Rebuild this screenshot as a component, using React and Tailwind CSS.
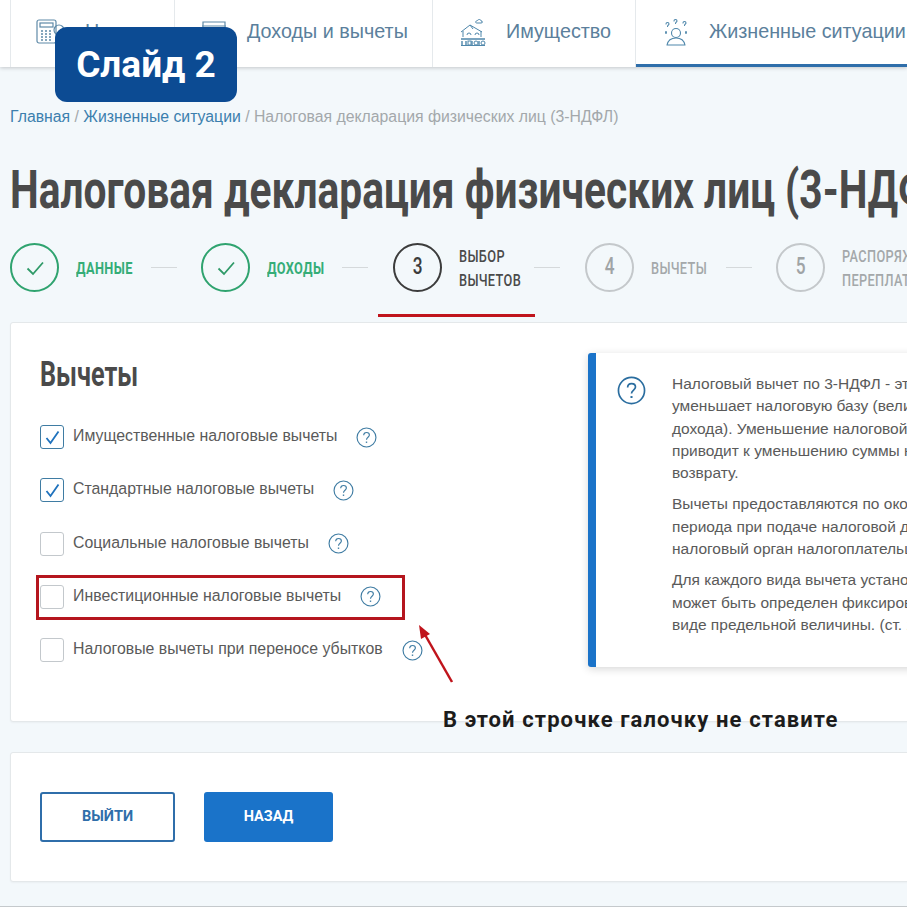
import React from 'react';

const TITLE_FONT = "font-['Roboto','Liberation_Sans',sans-serif]";

const steps = [
    { n: 1, lines: ['ДАННЫЕ'], state: 'done', w: 'w-[191px]' },
    { n: 2, lines: ['ДОХОДЫ'], state: 'done', w: 'w-[192px]' },
    { n: 3, lines: ['ВЫБОР', 'ВЫЧЕТОВ'], state: 'current', w: 'w-[192px]' },
    { n: 4, lines: ['ВЫЧЕТЫ'], state: 'todo', w: 'w-[191px]' },
    { n: 5, lines: ['РАСПОРЯЖЕНИЕ', 'ПЕРЕПЛАТОЙ'], state: 'todo', w: 'w-[300px]', last: true },
];

const deductions = [
    { label: 'Имущественные налоговые вычеты', checked: true },
    { label: 'Стандартные налоговые вычеты', checked: true },
    { label: 'Социальные налоговые вычеты', checked: false },
    { label: 'Инвестиционные налоговые вычеты', checked: false },
    { label: 'Налоговые вычеты при переносе убытков', checked: false },
];

const infoParagraphs = [
    [
        'Налоговый вычет по 3-НДФЛ - это сумма, которая',
        'уменьшает налоговую базу (величину',
        'дохода). Уменьшение налоговой базы',
        'приводит к уменьшению суммы налога к',
        'возврату.',
    ],
    [
        'Вычеты предоставляются по окончании',
        'периода при подаче налоговой декларации',
        'налоговый орган налогоплательщиком',
    ],
    [
        'Для каждого вида вычета установлен',
        'может быть определен фиксированной',
        'виде предельной величины. (ст. 218)',
    ],
];

const CalcIcon = () => (
    <svg width="30" height="26" viewBox="0 0 30 26" fill="none" stroke="#5f8aa8" strokeWidth="1.2">
        <rect x="1" y="1" width="19" height="23" rx="2" />
        <rect x="4" y="4" width="13" height="4" />
        <path d="M5 12h2M9 12h2M13 12h2M5 15h2M9 15h2M13 15h2M5 18h2M9 18h2M13 18h2M5 21h2M9 21h2M13 21h2" strokeWidth="1.6" />
        <circle cx="23" cy="11" r="5" />
    </svg>
);

const FolderIcon = () => (
    <svg width="28" height="24" viewBox="0 0 28 24" fill="none" stroke="#5f8aa8" strokeWidth="1.2">
        <path d="M2 20V2h22v6" />
        <path d="M1 6h24M1 9h26v13H1z" />
    </svg>
);

const HouseIcon = () => (
    <svg width="26" height="28" viewBox="0 0 26 28" fill="none" stroke="#4f87ab" strokeWidth="1">
        <path d="M1 14 10 7l12 7M3 13v6M21 13v6M10 7l3 4" />
        <path d="M17 5c-2 0 -2-2 0-2 1-2 4-2 4 0 2 0 2 2 0 2z" />
        <path d="M7 17a2 2 0 0 1 4 0M15 17a2 2 0 0 1 4 0" />
        <path d="M1 21h24M2 27V23M6 27V23M12 27V23M19 27V23" strokeWidth="1.4" />
        <rect x="8" y="23" width="3" height="4" />
        <circle cx="16" cy="25" r="2" />
        <circle cx="23" cy="25" r="2" />
        <path d="M1 27.5h24" />
    </svg>
);

const PersonIcon = () => (
    <svg width="26" height="28" viewBox="0 0 26 28" fill="none" stroke="#4f87ab" strokeWidth="1.1" strokeLinecap="round">
        <circle cx="13" cy="15" r="4.5" />
        <path d="M4 27c1-5 5-7 9-7s8 2 9 7M4 27h18" />
        <path d="M3 6c0-2 3-2 3 0 0 1-1.500 1-1.500 2.500M11 3c0-2 3-2 3 0 0 1-1.500 1-1.500 2.500M20 5c0-2 3-2 3 0 0 1-1.500 1-1.500 2.500" />
        <path d="M3 14v1M23 14v1" strokeWidth="1.800" />
    </svg>
);

const Tab = ({ icon, label, active, width, gap }) => (
    <div
        className={`flex h-[67px] shrink-0 items-center border-r border-[#e5e9ec] pl-[25px] ${gap} ${width} ${active ? 'border-b-[3px] border-b-[#2f6eaa]' : 'pb-[4px]'}`}
    >
        <span className="flex w-[30px] shrink-0 justify-center">{icon}</span>
        <span className="whitespace-nowrap font-['Liberation_Sans',sans-serif] text-[19.750px] text-[#5b7f9c]">{label}</span>
    </div>
);

const CheckCircle = () => (
    <svg width="24" height="24" viewBox="0 0 24 24" fill="none" stroke="#2f9a68" strokeWidth="1.800">
        <path d="M4.500 12.500 10 18 20 6.500" />
    </svg>
);

const Step = ({ step }) => {
    const { n, lines, state, w, last } = step;
    const circle = {
        done: 'border-[#2fa36f]',
        current: 'border-[#3c3c3c] text-[#3c3c3c]',
        todo: 'border-[#c4c8cb] text-[#a0a4a6]',
    }[state];
    const text = {
        done: 'text-[#35ad78] font-bold',
        current: 'text-[#4a4a4a] font-medium',
        todo: 'text-[#a4a8aa] font-medium',
    }[state];
    return (
        <div className={`flex shrink-0 items-center ${w}`}>
            <div className={`flex h-[49px] w-[49px] shrink-0 items-center justify-center rounded-full border-2 ${circle}`}>
                {state === 'done' ? (
                    <CheckCircle />
                ) : (
                    <span className={`${TITLE_FONT} inline-block scale-x-[0.75] text-[23px] font-medium`}>{n}</span>
                )}
            </div>
            <div className={`ml-[17px] w-[62px] shrink-0 ${TITLE_FONT} text-[17px] leading-[24px] ${text}`}>
                {lines.map((l) => (
                    <div key={l} className="origin-left scale-x-[0.75] whitespace-nowrap tracking-[0.5px]">{l}</div>
                ))}
            </div>
            {!last && <div className="ml-[13px] h-px w-[26px] shrink-0 bg-[#d5d9db]" />}
        </div>
    );
};

const HelpIcon = ({ size = 21, color = '#3f7ca3', strokeWidth = 1.300 }) => (
    <svg width={size} height={size} viewBox="0 0 24 24" fill="none" stroke={color} strokeWidth={strokeWidth} className="shrink-0">
        <circle cx="12" cy="12" r="10.800" />
        <path d="M8.800 9.500c0-2 1.500-3.200 3.300-3.200s3.200 1.200 3.200 2.900c0 2.500-3.300 2.500-3.300 5.300" />
        <path d="M12 16.600v1.600" strokeWidth={strokeWidth + 0.3} />
    </svg>
);

const DeductionRow = ({ label, checked }) => (
    <div className="flex h-[24px] items-center">
        <div className={`flex h-[24px] w-[24px] shrink-0 items-center justify-center rounded-[3px] border ${checked ? 'border-[#3f7ca3]' : 'border-[#c3c8cc]'}`}>
            {checked && (
                <svg width="17" height="17" viewBox="0 0 17 17" fill="none" stroke="#1f72bd" strokeWidth="1.800">
                    <path d="M2.500 9 6.500 14 14.500 2.500" />
                </svg>
            )}
        </div>
        <span className="ml-[9px] -mt-[2px] whitespace-nowrap font-['Liberation_Sans',sans-serif] text-[15.850px] text-[#5a5a5a]">{label}</span>
        <span className="ml-[19px]"><HelpIcon /></span>
    </div>
);

const App = () => (
    <div className="relative h-[907px] w-[907px] overflow-hidden bg-[#f3f8fb] pl-[10px]">
        {/* Top tabs */}
        <div className="relative -ml-[10px] flex h-[67px] w-[907px] bg-white pl-[10px] shadow-[0_1px_4px_rgba(0,0,0,0.2)]">
            <div className="flex">
                <Tab icon={<CalcIcon />} label="Налоги" width="w-[165px] border-l" gap="gap-[19px]" />
                <Tab icon={<FolderIcon />} label="Доходы и вычеты" width="w-[258px]" gap="gap-[17px]" />
                <Tab icon={<HouseIcon />} label="Имущество" width="w-[203px]" gap="gap-[18px]" />
                <Tab icon={<PersonIcon />} label="Жизненные ситуации" width="w-[300px]" gap="gap-[18px]" active />
            </div>
        </div>

        {/* Breadcrumbs */}
        <div className="mt-[40px] whitespace-nowrap font-['Liberation_Sans',sans-serif] text-[15.800px] leading-[20px] text-[#a3a8ab]">
            <span className="text-[#3c7fae]">Главная</span> / <span className="text-[#3c7fae]">Жизненные ситуации</span> / Налоговая декларация физических лиц (3-НДФЛ)
        </div>

        <h1 className={`${TITLE_FONT} mt-[33px] h-[60px] origin-left scale-x-[0.768] whitespace-nowrap text-[53px] font-bold leading-[60px] text-[#4a4a4a]`}>
            Налоговая декларация физических лиц (3-НДФЛ)
        </h1>

        {/* Stepper */}
        <div className="mt-[23px] flex h-[49px]">
            {steps.map((s) => (
                <Step key={s.n} step={s} />
            ))}
        </div>

        {/* Deductions card */}
        <div className="mt-[30px] flex h-[400px] w-[910px] rounded-[3px] border border-[#e4e8ea] bg-white pl-[29px] shadow-[0_1px_2px_rgba(0,0,0,0.04)]">
            <div className="w-[548px] shrink-0">
                <h2 className={`${TITLE_FONT} mt-[28px] h-[48px] origin-left scale-x-[0.72] text-[35px] font-bold leading-[48px] text-[#4a4a4a]`}>Вычеты</h2>
                <div className="mt-[26px] flex flex-col gap-[29.250px]">
                    {deductions.map((d) => (
                        <DeductionRow key={d.label} label={d.label} checked={d.checked} />
                    ))}
                </div>
            </div>
            <div className="mt-[30px] flex h-[314px] w-[340px] shrink-0 rounded-[3px] border-l-[8px] border-[#1a73c9] bg-white pl-[21px] shadow-[0_2px_8px_rgba(0,0,0,0.16)]">
                <div className="mt-[23px] h-[28px]"><HelpIcon size={29} color="#2a6d9f" strokeWidth={1.400} /></div>
                <div className="ml-[26px] mt-[20px] font-['Liberation_Sans',sans-serif] text-[15.500px] leading-[22.300px] text-[#5a5a5a]">
                    {infoParagraphs.map((lines) => (
                        <p key={lines[0]} className="mb-[9px]">
                            {lines.map((l) => (
                                <span key={l} className="block whitespace-nowrap">{l}</span>
                            ))}
                        </p>
                    ))}
                </div>
            </div>
        </div>

        {/* Actions card */}
        <div className="mt-[30px] flex h-[130px] w-[910px] items-center gap-[29px] rounded-[3px] border border-[#e4e8ea] bg-white pl-[29px] shadow-[0_1px_2px_rgba(0,0,0,0.04)]">
            <button className="h-[50px] w-[135px] rounded-[3px] border-2 border-[#2f6eaa] font-['Roboto',sans-serif] text-[14.500px] font-bold text-[#2f6eaa]">ВЫЙТИ</button>
            <button className="h-[50px] w-[129px] rounded-[3px] bg-[#1a73c9] font-['Roboto',sans-serif] text-[14.500px] font-bold text-white">НАЗАД</button>
        </div>

        {/* Bottom rule */}
        <div className="absolute bottom-0 left-0 h-px w-full bg-[#c5c9cc]" />

        {/* Slide badge */}
        <div className="absolute left-[55px] top-[27px] flex h-[75px] w-[182px] items-center justify-center rounded-[12px] bg-[#0c4b93] font-['Roboto',sans-serif] text-[37px] font-bold text-white">
            Слайд 2
        </div>

        {/* Annotations */}
        <div className="absolute left-[378px] top-[314px] h-[3px] w-[157px] bg-[#c0141c]" />
        <div className="absolute left-[36px] top-[575px] h-[45px] w-[369px] border-[3px] border-[#b5161e]" />
        <svg className="absolute left-[415px] top-[622px]" width="42" height="64" viewBox="0 0 42 64" fill="none">
            <path d="M37 60 9 11" stroke="#c0141c" strokeWidth="2.500" />
            <path d="M4 3 15 12 6 17Z" fill="#c0141c" />
        </svg>
        <div className="absolute left-[443px] top-[706px] whitespace-nowrap font-['Roboto',sans-serif] text-[22px] font-bold leading-[28px] tracking-[1.100px] text-[#1c1c1c]">
            В этой строчке галочку не ставите
        </div>
    </div>
);

export default App;
